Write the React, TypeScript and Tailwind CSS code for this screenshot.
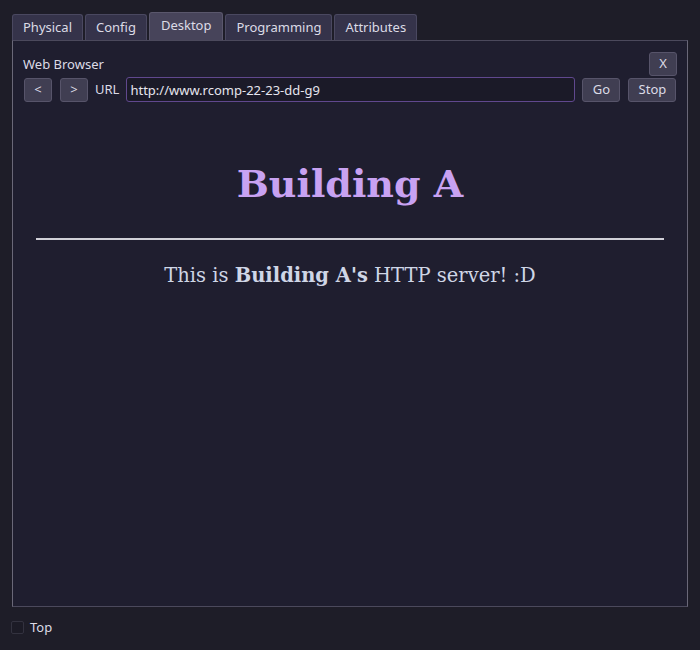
import { useState } from "react";

const tabs = ["Physical", "Config", "Desktop", "Programming", "Attributes"];

function Btn({ children, className = "" }: { children: React.ReactNode; className?: string }) {
    return (
        <button className={`h-[24px] rounded-[3px] border border-[#57546a] bg-[#403e52] text-[13px] text-[#dcdbe6] flex items-center justify-center ${className}`}>
            {children}
        </button>
    );
}

export default function App() {
    const [active, setActive] = useState("Desktop");
    const [url, setUrl] = useState("http://www.rcomp-22-23-dd-g9");

    return (
        <div className="w-[700px] h-[650px] bg-[#1e1d28] text-[#dcdbe6] flex flex-col font-['Noto_Sans',sans-serif] overflow-hidden">
            <div className="flex items-end gap-[2px] pl-[12px] pt-[12px] h-[40px]">
                {tabs.map((t) => (
                    <div
                        key={t}
                        onClick={() => setActive(t)}
                        className={
                            t === active
                                ? "h-[28px] px-[11px] rounded-t-[3px] border border-b-0 border-[#5a576c] bg-[#47445a] text-[13px] pt-[3px]"
                                : "h-[26px] px-[10px] rounded-t-[3px] border border-b-0 border-[#4a4860] bg-[#35334a] text-[13px] pt-[3px]"
                        }
                    >
                        {t}
                    </div>
                ))}
            </div>

            <div className="mx-[12px] h-[567px] border border-[#4b495c] border-l-[#6a6878] border-r-[#6a6878] bg-[#1f1e2f] flex flex-col">
                <div className="flex items-center justify-between pl-[10px] pr-[10px] pt-[11px]">
                    <span className="text-[13px] mt-[2px]">Web Browser</span>
                    <Btn className="w-[28px]">X</Btn>
                </div>
                <div className="flex items-center pl-[11px] pr-[10px] mt-[1px]">
                    <Btn className="w-[28px]">&lt;</Btn>
                    <Btn className="w-[28px] ml-[8px]">&gt;</Btn>
                    <span className="ml-[7px] text-[13px]">URL</span>
                    <input
                        value={url}
                        onChange={(e) => setUrl(e.target.value)}
                        className="ml-[7px] w-[449px] h-[25px] rounded-[3px] border border-[#60488e] bg-[#1b1a28] px-[3px] text-[13px] text-[#e6e5ee] outline-none"
                    />
                    <Btn className="w-[38px] ml-[7px]">Go</Btn>
                    <Btn className="w-[48px] ml-[8px]">Stop</Btn>
                </div>

                <div className="flex flex-col items-center px-[23px] font-['DejaVu_Serif',serif]">
                    <h1 className="mt-[58px] text-[38px] leading-[48px] font-bold text-[#c8a2f2]">Building A</h1>
                    <div className="w-full h-[2px] bg-[#d0d0d8] mt-[30px]" />
                    <p className="mt-[22px] text-[19.5px] leading-[28px] text-[#cfd6e6]">
                        This is <b>Building A's</b> HTTP server! :D
                    </p>
                </div>
            </div>

            <div className="flex items-center pl-[11px] mt-[11px]">
                <div className="w-[13px] h-[13px] border border-[#33323f] bg-[#1c1b26] rounded-[2px]" />
                <span className="ml-[6px] text-[13px]">Top</span>
            </div>
        </div>
    );
}
